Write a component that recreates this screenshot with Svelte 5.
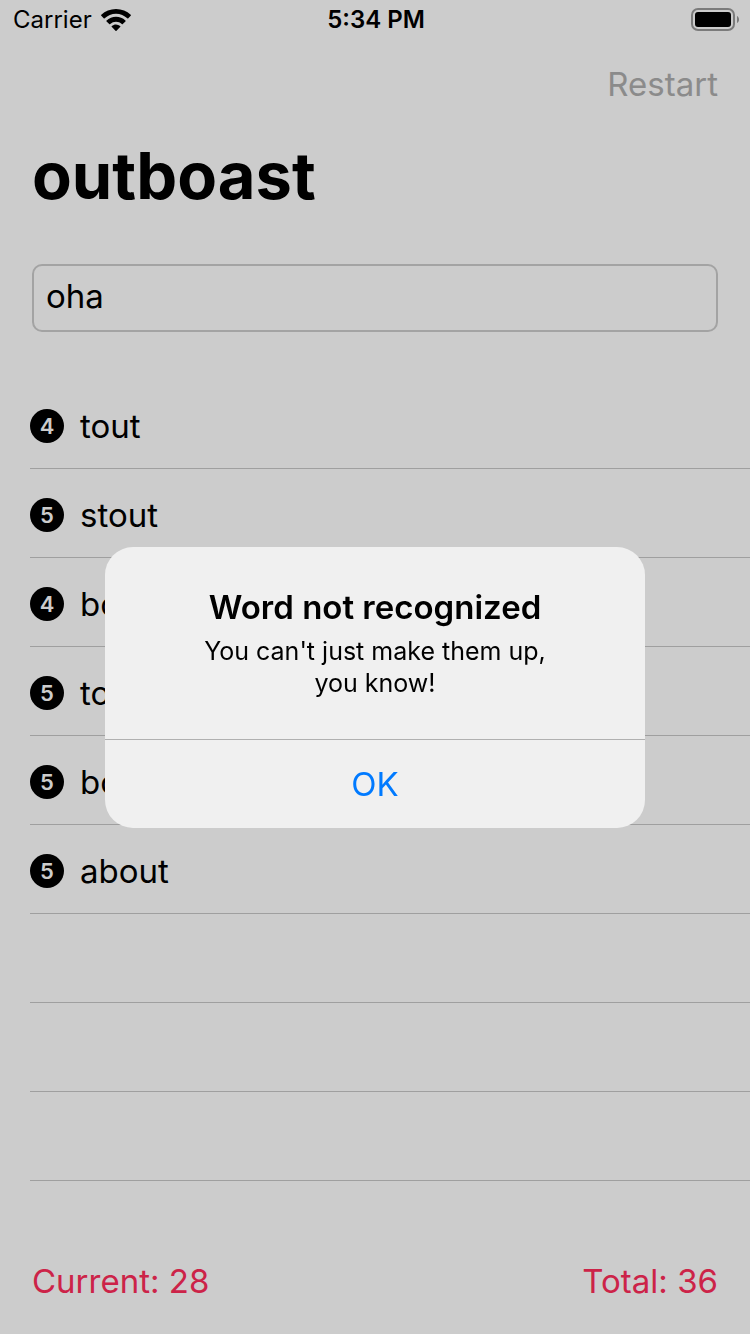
<script>
  const words = ['tout', 'stout', 'boat', 'toast', 'boats', 'about'];
  const emptyRows = [0, 1, 2];
  let guess = $state('oha');
  let alertOpen = $state(true);
</script>

<div class="screen">
  <header class="status">
    <div class="carrier">
      <span>Carrier</span>
      <svg class="wifi" viewBox="0 0 30 22" aria-hidden="true">
        <path d="M15 0C9.300 0 4.100 2.200 .3 5.800a.7.700 0 0 0 0 1l2.400 2.500a.7.700 0 0 0 1 0C6.700 6.400 10.600 4.700 15 4.700s8.300 1.700 11.300 4.600a.7.700 0 0 0 1 0l2.400-2.500a.7.700 0 0 0 0-1C25.900 2.200 20.700 0 15 0Z" />
        <path d="M15 7.700c-3.600 0-6.900 1.400-9.400 3.700a.7.700 0 0 0 0 1.100L8.200 15a.7.700 0 0 0 1 0A8.800 8.800 0 0 1 15 12.700c2.200 0 4.200.9 5.800 2.300a.7.700 0 0 0 1 0l2.600-2.500a.7.700 0 0 0 0-1.100A13.800 13.800 0 0 0 15 7.700Z" />
        <path d="M15 15.400c-1.600 0-3 .6-4.100 1.500a.7.700 0 0 0 0 1.100l3.600 3.700a.7.700 0 0 0 1 0l3.600-3.700a.7.700 0 0 0 0-1.100A6.300 6.300 0 0 0 15 15.400Z" />
      </svg>
    </div>
    <time>5:34 PM</time>
    <svg class="battery" viewBox="0 0 48 24" aria-hidden="true">
      <rect x="1" y="1" width="42" height="21" rx="6" fill="none" stroke="#7b7b7b" stroke-width="2" />
      <rect x="4" y="4" width="36" height="15" rx="3" />
      <path d="M46 8c2.700 1.500 2.700 5.500 0 7Z" fill="#7b7b7b" />
    </svg>
  </header>

  <main>
    <nav><button class="restart" type="button">Restart</button></nav>
    <h1>outboast</h1>
    <div class="entry">
      <input type="text" aria-label="Enter your word" bind:value={guess} />
    </div>
    <ul>
      {#each words as word}
        <li><span class="count">{word.length}</span><span>{word}</span></li>
      {/each}
      {#each emptyRows as row (row)}
        <li aria-hidden="true"></li>
      {/each}
    </ul>
  </main>

  <footer>
    <span>Current: 28</span>
    <span>Total: 36</span>
  </footer>
</div>

{#if alertOpen}
  <div class="overlay">
    <div class="alert" role="alertdialog" aria-modal="true" aria-labelledby="alert-title" aria-describedby="alert-text">
      <div class="message">
        <h2 id="alert-title">Word not recognized</h2>
        <p id="alert-text">You can't just make them up,<br />you know!</p>
      </div>
      <button type="button" onclick={() => (alertOpen = false)}>OK</button>
    </div>
  </div>
{/if}

<style>
  :global(body) {
    background: #ccc;
  }

  .screen,
  .overlay {
    font-family: Inter, "Liberation Sans", sans-serif;
    color: #000;
  }

  .screen {
    display: flex;
    flex-direction: column;
    min-height: 100vh;
    font-size: 33px;
    line-height: 40px;
  }

  button,
  input {
    font: inherit;
    color: inherit;
    background: none;
    border: 0;
  }

  .status {
    display: grid;
    grid-template-columns: 1fr auto 1fr;
    align-items: center;
    height: 40px;
    padding: 0 11px 0 13px;
    font-size: 24px;
  }

  .carrier {
    display: flex;
    align-items: center;
    gap: 9px;
  }

  .wifi {
    width: 30px;
    height: 22px;
  }

  time {
    font-weight: 600;
  }

  .battery {
    justify-self: end;
    width: 48px;
    height: 24px;
  }

  main {
    flex: 1;
  }

  nav {
    display: flex;
    justify-content: flex-end;
    align-items: center;
    height: 88px;
    padding: 0 32px;
  }

  .restart {
    padding: 0;
    color: #8b8b8b;
  }

  h1 {
    margin: 0;
    padding: 8px 32px 0;
    font-size: 65px;
    line-height: 80px;
    font-weight: 700;
  }

  .entry {
    padding: 48px 32px;
  }

  input {
    display: block;
    box-sizing: border-box;
    width: 100%;
    height: 68px;
    padding: 0 12px 4px;
    border: 2px solid #a3a3a3;
    border-radius: 10px;
    outline: none;
  }

  ul {
    margin: 0;
    padding: 0 0 0 30px;
    list-style: none;
  }

  li {
    display: flex;
    align-items: center;
    gap: 16px;
    height: 85px;
    padding-top: 3px;
    border-bottom: 1px solid #9f9f9f;
  }

  .count {
    display: grid;
    place-items: center;
    width: 34px;
    height: 34px;
    border-radius: 50%;
    background: #000;
    color: #ccc;
    font-size: 22px;
    line-height: 34px;
    font-weight: 600;
  }

  footer {
    display: flex;
    justify-content: space-between;
    padding: 32px 32px 33px;
    color: #cc2348;
  }

  .overlay {
    position: fixed;
    inset: 0;
    display: grid;
    place-items: center;
    padding: 40px 32px 0;
  }

  .alert {
    width: 100%;
    max-width: 540px;
    border-radius: 28px;
    overflow: hidden;
    background: #f0f0f0;
    text-align: center;
  }

  .message {
    padding: 40px 32px;
  }

  h2 {
    margin: 0;
    font-size: 33px;
    line-height: 40px;
    font-weight: 600;
  }

  p {
    margin: 8px 0 0;
    font-size: 25px;
    line-height: 32px;
  }

  .alert button {
    display: block;
    width: 100%;
    height: 89px;
    border-top: 1px solid #b0b0b0;
    color: #007aff;
    font-size: 33px;
    line-height: 40px;
  }
</style>
